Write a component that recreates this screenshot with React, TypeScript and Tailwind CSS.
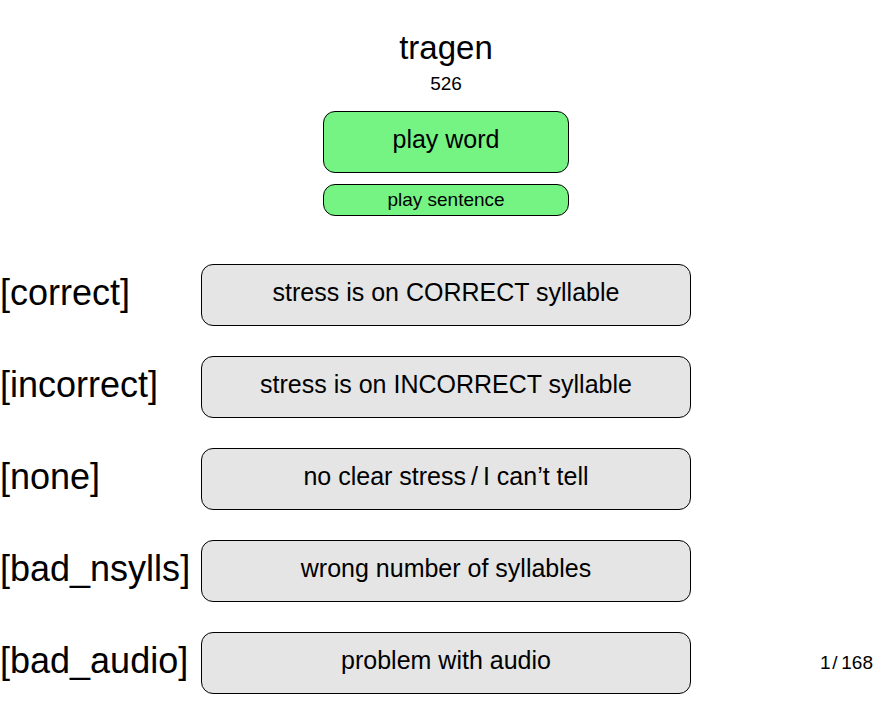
const answers = [
  { id: "correct", text: "stress is on CORRECT syllable" },
  { id: "incorrect", text: "stress is on INCORRECT syllable" },
  { id: "none", text: "no clear stress\u2009/\u2009I can’t tell" },
  { id: "bad_nsylls", text: "wrong number of syllables" },
  { id: "bad_audio", text: "problem with audio" },
];

export default function App() {
  return (
    <main className="min-h-screen bg-white pt-7 font-['Liberation_Sans',Arial,sans-serif] text-black">
      <header className="grid grid-cols-[201px_1fr_190px]">
        <div className="col-start-2 flex flex-col items-center">
          <h1 className="text-[33px] leading-10">tragen</h1>
          <p className="text-[19px] leading-8">526</p>
          <button className="mt-[11px] h-[62px] w-1/2 min-w-[246px] rounded-xl border border-black bg-[#75f383] pb-1 text-[25px]">
            play word
          </button>
          <button className="mt-[11px] h-8 w-1/2 min-w-[246px] rounded-xl border border-black bg-[#75f383] text-[19px] leading-7">
            play sentence
          </button>
        </div>
      </header>
      <section className="mt-12 flex flex-col gap-[30px]">
        {answers.map((answer) => (
          <div key={answer.id} className="grid grid-cols-[201px_1fr_190px] items-center">
            <label htmlFor={answer.id} className="pb-1 text-[36px] leading-10">
              [{answer.id}]
            </label>
            <button
              id={answer.id}
              className="h-[62px] rounded-xl border border-black bg-[#e5e5e5] pb-1 text-[25px]"
            >
              {answer.text}
            </button>
            {answer.id === "bad_audio" && (
              <p className="pr-2 text-right text-[19px]">1{"\u200A"}/{"\u2009"}168</p>
            )}
          </div>
        ))}
      </section>
    </main>
  );
}
